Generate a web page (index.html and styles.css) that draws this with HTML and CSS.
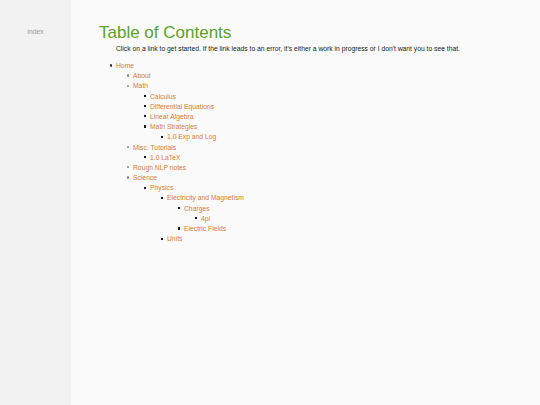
FILE: index.html
```html
<!DOCTYPE html>
<html>
<head>
<meta charset="utf-8">
<link rel="stylesheet" href="styles.css">
</head>
<body>
<div class="layout">
  <aside class="sidebar"><span class="side-link">index</span></aside>
  <main class="content">
    <h1 class="title">Table of Contents</h1>
    <p class="intro">Click on a link to get started. If the link leads to an error, it's either a work in progress or I don't want you to see that.</p>
    <ul class="toc">
      <li><a href="#">Home</a>
        <ul>
          <li><a href="#">About</a></li>
          <li><a href="#">Math</a>
            <ul>
              <li><a href="#">Calculus</a></li>
              <li><a href="#">Differential Equations</a></li>
              <li><a href="#">Linear Algebra</a></li>
              <li><a href="#">Math Strategies</a>
                <ul><li><a href="#">1.0 Exp and Log</a></li></ul>
              </li>
            </ul>
          </li>
          <li><a href="#">Misc. Tutorials</a>
            <ul><li><a href="#">1.0 LaTeX</a></li></ul>
          </li>
          <li><a href="#">Rough NLP notes</a></li>
          <li><a href="#">Science</a>
            <ul>
              <li><a href="#">Physics</a>
                <ul>
                  <li><a href="#">Electricity and Magnetism</a>
                    <ul>
                      <li><a href="#">Charges</a>
                        <ul><li><a href="#">4pi</a></li></ul>
                      </li>
                      <li><a href="#">Electric Fields</a></li>
                    </ul>
                  </li>
                  <li><a href="#">Units</a></li>
                </ul>
              </li>
            </ul>
          </li>
        </ul>
      </li>
    </ul>
  </main>
</div>
</body>
</html>
```
FILE: styles.css
```css
html, body {
  margin: 0;
  padding: 0;
  height: 100%;
}
body {
  font-family: "Liberation Sans", Arial, sans-serif;
  background: #fafafa;
  color: #1a1a1a;
}
.layout {
  display: flex;
  min-height: 405px;
}
.sidebar {
  width: 71px;
  flex: none;
  background: #f2f2f2;
  display: flex;
  justify-content: center;
  padding-top: 28px;
  box-sizing: border-box;
}
.side-link {
  font-size: 6.75px;
  color: #9a9a9a;
  line-height: 8px;
}
.content {
  flex: 1;
  padding-left: 28px;
  padding-top: 23px;
}
.title {
  margin: 0;
  font-size: 17px;
  font-weight: normal;
  color: #5ca12c;
  line-height: 19px;
}
.intro {
  margin: 2px 0 0 17px;
  font-size: 6.75px;
  line-height: 10px;
}
.toc, .toc ul {
  margin: 0;
  padding-left: 17px;
  list-style: none;
}
.toc {
  margin-top: 7px;
  font-size: 6.75px;
  line-height: 10.18px;
}
.toc li::before {
  content: "";
  display: inline-block;
  width: 2.3px;
  height: 2.3px;
  border-radius: 50%;
  background: #333;
  margin-left: -6.3px;
  margin-right: 4px;
  vertical-align: 1.5px;
}
.toc ul > li::before {
  background: #8a8a8a;
}
.toc ul ul > li::before {
  width: 2.2px;
  height: 2.2px;
  border-radius: 0;
  background: #1a1a1a;
  margin-left: -6.2px;
}
.toc a {
  color: #d67d32;
  text-decoration: none;
}
```
